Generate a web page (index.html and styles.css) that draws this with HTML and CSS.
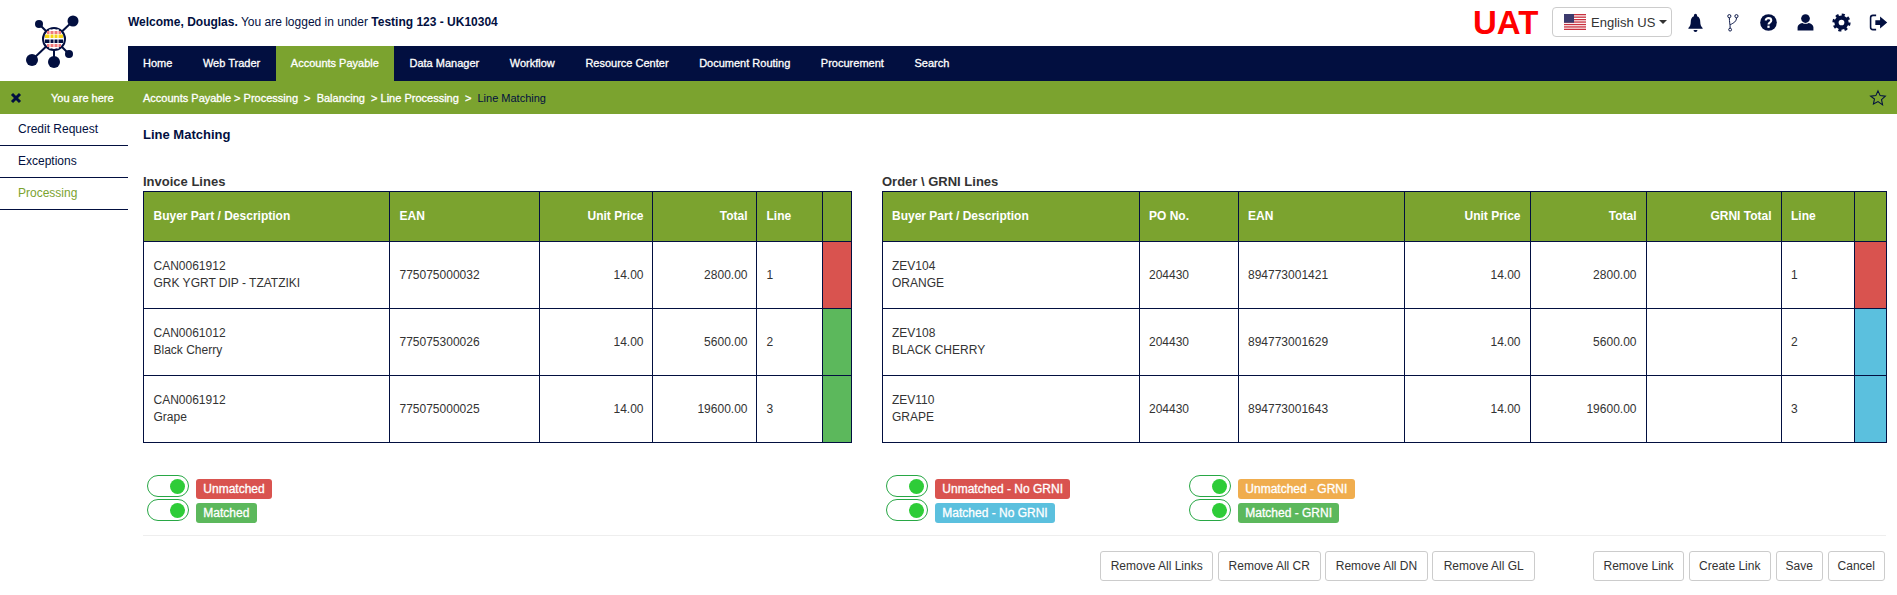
FILE: index.html
```html
<!DOCTYPE html>
<html lang="en">
<head>
<meta charset="utf-8">
<title>Line Matching</title>
<link rel="stylesheet" href="styles.css">
</head>
<body>
<header class="top">
  <div class="logo">
    <svg viewBox="0 0 128 81" width="128" height="81">
      <g stroke="#020f40" stroke-width="2" fill="#020f40">
        <line x1="54" y1="39" x2="73" y2="21"/><line x1="54" y1="39" x2="39" y2="24"/>
        <line x1="54" y1="39" x2="32" y2="60"/><line x1="54" y1="39" x2="54" y2="62"/>
        <line x1="54" y1="39" x2="69" y2="54"/>
      </g>
      <g fill="#020f40">
        <circle cx="73" cy="21" r="5.500"/><circle cx="39" cy="24" r="4"/><circle cx="32" cy="60" r="6"/>
        <circle cx="54" cy="62" r="6"/><circle cx="69" cy="54" r="4"/>
      </g>
      <circle cx="54" cy="39" r="11" fill="#fff" stroke="#020f40" stroke-width="2"/>
      <rect x="47" y="31" width="14" height="3" fill="#f07a7a"/>
      <rect x="45" y="34.500" width="18" height="3.500" fill="#f5d415"/>
      <rect x="45" y="39.500" width="18" height="3.500" fill="#020f40"/>
      <rect x="47" y="44" width="14" height="3" fill="#f07a7a"/>
      <g stroke="#fff" stroke-width="1"><line x1="50" y1="29" x2="50" y2="49"/><line x1="54" y1="29" x2="54" y2="49"/><line x1="58" y1="29" x2="58" y2="49"/></g>
    </svg>
  </div>
  <div class="top-main">
    <div class="topbar">
      <p class="welcome"><b>Welcome, Douglas.</b> You are logged in under <b>Testing 123 - UK10304</b></p>
      <div class="tools">
        <span class="uat">UAT</span>
        <button class="lang" type="button">
          <svg class="flag" viewBox="0 0 22 16" width="22" height="16">
            <rect width="22" height="16" fill="#fff"/>
            <g fill="#c9303e"><rect y="0" width="22" height="1.300"/><rect y="2.500" width="22" height="1.300"/><rect y="5" width="22" height="1.300"/><rect y="7.400" width="22" height="1.300"/><rect y="9.900" width="22" height="1.300"/><rect y="12.300" width="22" height="1.300"/><rect y="14.700" width="22" height="1.300"/></g>
            <rect width="10" height="8.700" fill="#3c3b6e"/>
          </svg>
          English US <i class="caret"></i>
        </button>
        <div class="icons">
          <svg viewBox="0 0 24 24" width="19" height="19"><path d="M12 1a2 2 0 0 0-2 2v1C7 5 6 8 6 11c0 4-1 6-3 8v1h18v-1c-2-2-3-4-3-8 0-3-1-6-4-7V3a2 2 0 0 0-2-2zM9.500 21.500a2.500 2.500 0 0 0 5 0z" fill="#020f40"/></svg>
          <svg viewBox="0 0 24 24" width="19" height="19" fill="none" stroke="#020f40" stroke-width="1.200"><circle cx="8" cy="4" r="2"/><circle cx="17" cy="4" r="2"/><circle cx="9" cy="21" r="1.800"/><path d="M8 6c0 5 1 8 1 13M17 6c0 5-3 6-8 9"/></svg>
          <svg viewBox="0 0 24 24" width="19" height="19"><circle cx="12" cy="12" r="10.500" fill="#020f40"/><path d="M8.500 9.500c0-2 1.500-3 3.500-3s3.500 1.200 3.500 3c0 2.800-3.500 2.500-3.500 5" fill="none" stroke="#fff" stroke-width="2.600"/><rect x="10.600" y="16" width="2.800" height="2.800" fill="#fff"/></svg>
          <svg viewBox="0 0 24 24" width="19" height="19"><circle cx="12" cy="7" r="5.500" fill="#020f40"/><path d="M2 22v-4c0-3 3-5 6-5.500 2.500 1.500 5.500 1.500 8 0 3 .5 6 2.500 6 5.500v4z" fill="#020f40"/></svg>
          <svg viewBox="0 0 24 24" width="19" height="19"><circle cx="12" cy="12" r="9" fill="#020f40"/><circle cx="12" cy="12" r="9.500" fill="none" stroke="#020f40" stroke-width="4" stroke-dasharray="3.700 3.760"/><circle cx="12" cy="12" r="3.600" fill="#fff"/></svg>
          <svg viewBox="0 0 24 24" width="19" height="19"><path d="M9 3H5a3 3 0 0 0-3 3v12a3 3 0 0 0 3 3h4" fill="none" stroke="#020f40" stroke-width="2"/><path d="M14 4.500 23 12l-9 7.500V15H8V9h6z" fill="#020f40"/></svg>
        </div>
      </div>
    </div>
    <nav class="nav">
      <a href="#">Home</a><a href="#">Web Trader</a><a href="#" class="active">Accounts Payable</a><a href="#">Data Manager</a><a href="#">Workflow</a><a href="#">Resource Center</a><a href="#">Document Routing</a><a href="#">Procurement</a><a href="#">Search</a>
    </nav>
  </div>
</header>

<div class="crumb">
  <div class="crumb-left">
    <svg viewBox="0 0 12 12" width="12" height="12"><path d="M2 2l8 8M10 2l-8 8" stroke="#020f40" stroke-width="3"/></svg>
    <span>You are here</span>
  </div>
  <div class="trail">Accounts Payable &gt; Processing&nbsp; &gt;&nbsp; Balancing&nbsp; &gt; Line Processing&nbsp; &gt;&nbsp; <em>Line Matching</em></div>
  <svg class="star" viewBox="0 0 24 24" width="18" height="18"><path d="M12 2.500l2.900 6.300 6.900.8-5.100 4.700 1.400 6.800L12 16.700l-6.100 3.400 1.400-6.800L2.200 9.600l6.900-.8z" fill="none" stroke="#020f40" stroke-width="1.400"/></svg>
</div>

<div class="page">
  <aside class="side">
    <a href="#">Credit Request</a>
    <a href="#">Exceptions</a>
    <a href="#" class="on">Processing</a>
  </aside>
  <main class="main">
    <h1>Line Matching</h1>
    <div class="panels">
      <section>
        <h2>Invoice Lines</h2>
        <table class="inv">
          <thead><tr><th>Buyer Part / Description</th><th>EAN</th><th class="r">Unit Price</th><th class="r">Total</th><th>Line</th><th></th></tr></thead>
          <tbody>
            <tr><td>CAN0061912<br>GRK YGRT DIP - TZATZIKI</td><td>775075000032</td><td class="r">14.00</td><td class="r">2800.00</td><td>1</td><td class="red"></td></tr>
            <tr><td>CAN0061012<br>Black Cherry</td><td>775075300026</td><td class="r">14.00</td><td class="r">5600.00</td><td>2</td><td class="green"></td></tr>
            <tr><td>CAN0061912<br>Grape</td><td>775075000025</td><td class="r">14.00</td><td class="r">19600.00</td><td>3</td><td class="green"></td></tr>
          </tbody>
        </table>
      </section>
      <section>
        <h2>Order \ GRNI Lines</h2>
        <table class="ord">
          <thead><tr><th>Buyer Part / Description</th><th>PO No.</th><th>EAN</th><th class="r">Unit Price</th><th class="r">Total</th><th class="r">GRNI Total</th><th>Line</th><th></th></tr></thead>
          <tbody>
            <tr><td>ZEV104<br>ORANGE</td><td>204430</td><td>894773001421</td><td class="r">14.00</td><td class="r">2800.00</td><td></td><td>1</td><td class="red"></td></tr>
            <tr><td>ZEV108<br>BLACK CHERRY</td><td>204430</td><td>894773001629</td><td class="r">14.00</td><td class="r">5600.00</td><td></td><td>2</td><td class="blue"></td></tr>
            <tr><td>ZEV110<br>GRAPE</td><td>204430</td><td>894773001643</td><td class="r">14.00</td><td class="r">19600.00</td><td></td><td>3</td><td class="blue"></td></tr>
          </tbody>
        </table>
      </section>
    </div>

    <div class="legends">
      <div class="legend-a">
        <div class="lrow"><i class="toggle"></i><span class="badge red">Unmatched</span></div>
        <div class="lrow"><i class="toggle"></i><span class="badge green">Matched</span></div>
      </div>
      <div class="legend-b">
        <div class="lgroup">
          <div class="lrow"><i class="toggle"></i><span class="badge red">Unmatched - No GRNI</span></div>
          <div class="lrow"><i class="toggle"></i><span class="badge blue">Matched - No GRNI</span></div>
        </div>
        <div class="lgroup">
          <div class="lrow"><i class="toggle"></i><span class="badge orange">Unmatched - GRNI</span></div>
          <div class="lrow"><i class="toggle"></i><span class="badge green">Matched - GRNI</span></div>
        </div>
      </div>
    </div>

    <div class="actions">
      <div class="btns bulk">
        <button type="button">Remove All Links</button><button type="button">Remove All CR</button><button type="button">Remove All DN</button><button type="button">Remove All GL</button>
      </div>
      <div class="btns single">
        <button type="button">Remove Link</button><button type="button">Create Link</button><button type="button">Save</button><button type="button">Cancel</button>
      </div>
    </div>
  </main>
</div>
</body>
</html>
```

FILE: styles.css
```css
* { box-sizing: border-box; }
html, body { margin: 0; padding: 0; background: #fff; }
body { font-family: "Liberation Sans", Arial, sans-serif; font-size: 12px; color: #333; overflow: hidden; }

.top { display: flex; height: 81px; }
.logo { width: 128px; flex: none; }
.logo svg { display: block; }
.top-main { flex: 1; display: flex; flex-direction: column; min-width: 0; }
.topbar { height: 46px; display: flex; align-items: center; justify-content: space-between; }
.welcome { margin: 0; font-size: 12px; color: #020f40; position: relative; top: -1px; }
.tools { display: flex; align-items: center; }
.uat { font-size: 33px; font-weight: 700; color: #f00; width: 79px; line-height: 46px; }
.lang { width: 120px; height: 30px; padding: 0 0 0 11px; display: flex; align-items: center; gap: 5px; background: #fff; border: 1px solid #ccc; border-radius: 4px; font: 13px "Liberation Sans", Arial, sans-serif; color: #333; position: relative; top: -1px; }
.flag { flex: none; }
.caret { width: 0; height: 0; border: 4px solid transparent; border-top-color: #333; border-bottom: 0; margin-left: -1px; }
.icons { display: flex; gap: 17.600px; margin: 0 9px 0 14px; position: relative; top: -1px; }
.icons svg { display: block; flex: none; }

.nav { height: 35px; background: #020f40; display: flex; }
.nav a { padding: 0 15.300px; line-height: 35px; font-size: 11px; color: #fff; text-decoration: none; -webkit-text-stroke: .3px #fff; }
.nav a:first-child { padding-left: 15px; }
.nav a.active { background: #7ba32f; }

.crumb { height: 33px; background: #7ba32f; display: flex; align-items: center; color: #fff; font-size: 11px; }
.crumb-left { width: 143px; flex: none; display: flex; align-items: center; padding-left: 10px; gap: 29px; -webkit-text-stroke: .3px #fff; }
.crumb-left svg { flex: none; }
.trail { flex: 1; -webkit-text-stroke: .3px #fff; }
.trail em { font-style: normal; color: #020f40; -webkit-text-stroke: 0; }
.star { margin-right: 10px; flex: none; }

.page { display: flex; }
.side { width: 128px; flex: none; display: flex; flex-direction: column; }
.side a { height: 32px; line-height: 30px; padding-left: 18px; border-bottom: 1px solid #020f40; color: #020f40; text-decoration: none; font-size: 12px; }
.side a.on { color: #7ba32f; }

.main { flex: 1; padding: 0 11px 0 15px; min-width: 0; }
h1 { margin: 0; padding-top: 12px; height: 59px; font-size: 13px; line-height: 17px; font-weight: 700; color: #020f40; }
.panels { display: grid; grid-template-columns: 708px 1004px; column-gap: 31px; }
h2 { margin: 0; height: 18px; font-size: 13px; line-height: 18px; font-weight: 700; color: #333; }

table { border-collapse: collapse; table-layout: fixed; width: 100%; border: 1px solid #020f40; font-size: 12px; }
th, td { border: 1px solid #020f40; padding: 0 8.500px 0 9.500px; text-align: left; vertical-align: middle; line-height: 17px; }
th { height: 50px; background: #7ba32f; color: #fff; font-weight: 700; }
td { height: 67px; color: #333; }
.r { text-align: right; }
.ord th, .ord td { padding: 0 9.500px 0 9px; }

.inv th:nth-child(1) { width: 246px; }
.inv th:nth-child(2) { width: 150px; }
.inv th:nth-child(3) { width: 113px; }
.inv th:nth-child(4) { width: 104px; }
.inv th:nth-child(5) { width: 66px; }
.inv th:nth-child(6) { width: 29px; }

.ord th:nth-child(1) { width: 257px; }
.ord th:nth-child(2) { width: 99px; }
.ord th:nth-child(3) { width: 166px; }
.ord th:nth-child(4) { width: 126px; }
.ord th:nth-child(5) { width: 116px; }
.ord th:nth-child(6) { width: 135px; }
.ord th:nth-child(7) { width: 73px; }
.ord th:nth-child(8) { width: 32px; }

.red { background: #d9534f; }
.green { background: #5cb85c; }
.blue { background: #5bc0de; }
.orange { background: #f0ad4e; }

.legends { display: grid; grid-template-columns: 708px 1004px; column-gap: 31px; margin-top: 32px; padding-bottom: 12px; border-bottom: 1px solid #eee; }
.legend-a { padding-left: 4px; }
.legend-b { padding-left: 4px; display: grid; grid-template-columns: 303px 1fr; }
.lrow { display: flex; align-items: flex-start; height: 24px; gap: 7px; }
.toggle { display: block; position: relative; width: 42px; height: 22px; border: 1px solid #28a745; border-radius: 11px; background: #fff; flex: none; }
.toggle::after { content: ""; position: absolute; right: 3px; top: 3px; width: 15px; height: 15px; border-radius: 50%; background: #2ecc38; }
.badge { display: block; height: 20px; margin-top: 4px; padding: 0 7.300px; border-radius: 3px; color: #fff; font-size: 12px; line-height: 20px; -webkit-text-stroke: .3px #fff; }

.actions { display: flex; justify-content: flex-end; gap: 58px; margin-top: 15px; padding-right: 1px; }
.btns { display: flex; gap: 4.500px; }
.btns button { height: 30px; padding: 0; background: #fff; border: 1px solid #ccc; border-radius: 3px; font: 12px "Liberation Sans", Arial, sans-serif; color: #333; }
.bulk button { width: 102.700px; }
.bulk button:first-child { width: 113.500px; }
.single button:nth-child(1) { width: 91px; }
.single button:nth-child(2) { width: 82.500px; }
.single button:nth-child(3) { width: 47.500px; }
.single button:nth-child(4) { width: 57.500px; }
```
